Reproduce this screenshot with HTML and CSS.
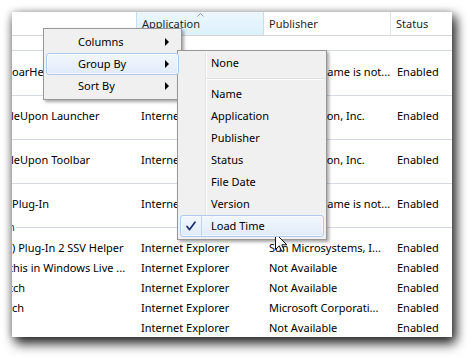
FILE: index.html
```html
<!DOCTYPE html>
<html>
<head>
<meta charset="utf-8">
<link rel="stylesheet" href="styles.css">
</head>
<body>
<div class="win">
  <div class="hdr">
    <div class="hc"></div>
    <div class="hc hot">Application<svg class="sort" width="7" height="4" viewBox="0 0 7 4"><path d="M0.5 3.5 L3.5 0.5 L6.5 3.5" fill="none" stroke="#8fa2b7" stroke-width="1"/></svg></div>
    <div class="hc hot-next">Publisher</div>
    <div class="hc">Status</div>
  </div>
  <div class="spacer"></div>
  <div class="row big ra">
    <div class="c1"><span>oarHelper</span></div>
    <div class="c">Internet Explorer</div>
    <div class="c">Publisher name is not...</div>
    <div class="c">Enabled</div>
  </div>
  <div class="row big">
    <div class="c1"><span class="cut1">leUpon Launcher</span></div>
    <div class="c">Internet Explorer</div>
    <div class="c">StumbleUpon, Inc.</div>
    <div class="c">Enabled</div>
  </div>
  <div class="row big">
    <div class="c1"><span class="cut1">leUpon Toolbar</span></div>
    <div class="c">Internet Explorer</div>
    <div class="c">StumbleUpon, Inc.</div>
    <div class="c">Enabled</div>
  </div>
  <div class="row rd">
    <div class="c1"><span>Plug-In</span></div>
    <div class="c">Internet Explorer</div>
    <div class="c">Publisher name is not...</div>
    <div class="c">Enabled</div>
  </div>
  <div class="grp"><span>n</span></div>
  <div class="row sm">
    <div class="c1"><span>) Plug-In 2 SSV Helper</span></div>
    <div class="c">Internet Explorer</div>
    <div class="c">Sun Microsystems, I...</div>
    <div class="c">Enabled</div>
  </div>
  <div class="row sm">
    <div class="c1"><span class="cut2">this in Windows Live ...</span></div>
    <div class="c">Internet Explorer</div>
    <div class="c">Not Available</div>
    <div class="c">Enabled</div>
  </div>
  <div class="row sm">
    <div class="c1"><span class="cut2">tch</span></div>
    <div class="c">Internet Explorer</div>
    <div class="c">Not Available</div>
    <div class="c">Enabled</div>
  </div>
  <div class="row sm">
    <div class="c1"><span>ch</span></div>
    <div class="c">Internet Explorer</div>
    <div class="c">Microsoft Corporati...</div>
    <div class="c">Enabled</div>
  </div>
  <div class="row sm">
    <div class="c1"><span></span></div>
    <div class="c">Internet Explorer</div>
    <div class="c">Not Available</div>
    <div class="c">Enabled</div>
  </div>
</div>

<div class="menu m1">
  <div class="mi">Columns<i class="arr"></i></div>
  <div class="mi hl">Group By<i class="arr"></i></div>
  <div class="mi">Sort By<i class="arr"></i></div>
</div>

<div class="menu m2">
  <div class="mi">None</div>
  <div class="sep"></div>
  <div class="mi">Name</div>
  <div class="mi">Application</div>
  <div class="mi">Publisher</div>
  <div class="mi">Status</div>
  <div class="mi">File Date</div>
  <div class="mi">Version</div>
  <div class="mi hl checked"><span class="chkbox"><svg width="10" height="10" viewBox="0 0 10 10"><path d="M1 5.5 L3.6 8.6 L9 1.2" fill="none" stroke="#1b2d6e" stroke-width="1.7" stroke-linejoin="round" stroke-linecap="round"/></svg></span>Load Time</div>
</div>

<svg class="cursor" width="13" height="20" viewBox="0 0 13 20"><path d="M0.5 0.5 L0.5 16.5 L4.3 12.8 L6.8 18.5 L9.2 17.4 L6.8 11.8 L11.8 11.8 Z" fill="#fff" stroke="#111" stroke-width="1" stroke-linejoin="miter"/></svg>
</body>
</html>
```
FILE: styles.css
```css
* { box-sizing: border-box; }
html, body { margin: 0; }
body {
  width: 473px;
  height: 358px;
  overflow: hidden;
  position: relative;
  background: #fff;
  padding: 12px 0 0 12px;
  font-family: "Noto Sans", "Open Sans", sans-serif;
  font-size: 11px;
  line-height: 16px;
  color: #000;
}
.win {
  width: 440px;
  height: 325px;
  background: #fff;
  overflow: hidden;
  box-shadow: 3px 7px 11px rgba(0,0,0,0.75), 5px 2px 9px rgba(0,0,0,0.35), -2px 0 7px rgba(0,0,0,0.18);
}
.hdr {
  display: grid;
  grid-template-columns: 124px 127px 127px 1fr;
  height: 24px;
  border-bottom: 1px solid #d5d5d5;
}
.hc {
  padding: 4px 0 0 5px;
  border-left: 1px solid #e2e2e2;
  color: #1e1e1e;
  position: relative;
  white-space: nowrap;
}
.hc:first-child { border-left: 0; }
.hot {
  background: linear-gradient(#ecf7fd, #dcf1fc);
  border-left-color: #c3dff1;
}
.hot-next { border-left-color: #c3dff1; }
.sort { position: absolute; left: 60px; top: 1px; }
.spacer { height: 15px; border-bottom: 1px solid #d6dbe1; }
.row {
  display: grid;
  grid-template-columns: 124px 127px 127px 1fr;
  align-items: center;
}
.big { height: 44px; border-bottom: 1px solid #d6dbe1; padding-bottom: 3px; }
.ra { height: 45px; }
.rd { height: 32px; padding-top: 8px; }
.sm { height: 20px; }
.c, .c1 { white-space: nowrap; overflow: hidden; }
.c { padding-left: 5px; }
.row .c:nth-child(3) { padding-left: 6px; }
.row .c:nth-child(4) { padding-left: 7px; }
.c1 span { display: inline-block; }
.cut1 { margin-left: -1px; }
.cut2 { margin-left: -3px; }
.grp {
  height: 22px;
  display: flex;
  align-items: center;
  color: #1e3287;
  overflow: hidden;
}
.grp span { margin-left: -4px; }
.grp::after {
  content: "";
  flex: 1;
  height: 1px;
  background: #d6dbe1;
  margin-left: 1px;
}

.menu {
  position: absolute;
  background: #f0f0f0;
  border: 1px solid #979797;
  box-shadow: 2px 2px 3px rgba(0,0,0,0.35);
}
.m1 { left: 43px; top: 28px; width: 139px; padding: 2px; }
.m2 { left: 177px; top: 50px; width: 150px; padding: 1px 2px 2px; }
.m2::before {
  content: "";
  position: absolute;
  left: 27px;
  top: 1px;
  bottom: 1px;
  width: 1px;
  background: #e2e3e3;
  box-shadow: 1px 0 0 #fff;
}
.mi {
  position: relative;
  height: 22px;
  display: flex;
  align-items: center;
  border: 1px solid transparent;
  border-radius: 3px;
  white-space: nowrap;
}
.m1 .mi { padding-left: 31px; }
.m2 .mi { padding-left: 30px; }
.hl {
  border-color: #aecbee;
  background: linear-gradient(#f2f7fd, #e0ebf9);
  box-shadow: inset 0 0 0 1px rgba(255,255,255,0.55);
  z-index: 1;
}
.arr {
  position: absolute;
  right: 9px;
  top: 6px;
  width: 0;
  height: 0;
  border-left: 4px solid #000;
  border-top: 4px solid transparent;
  border-bottom: 4px solid transparent;
}
.sep { position: relative; height: 9px; margin-left: 26px; }
.sep::after {
  content: "";
  position: absolute;
  left: 0;
  right: 0;
  top: 4px;
  height: 1px;
  background: #e0e0e0;
  box-shadow: 0 1px 0 #fff;
}
.chkbox {
  position: absolute;
  left: 0;
  top: 0;
  bottom: 0;
  width: 21px;
  border-right: 1px solid #c2d5ec;
  display: flex;
  align-items: center;
  justify-content: center;
}
.cursor { position: absolute; left: 275px; top: 233px; }
```
